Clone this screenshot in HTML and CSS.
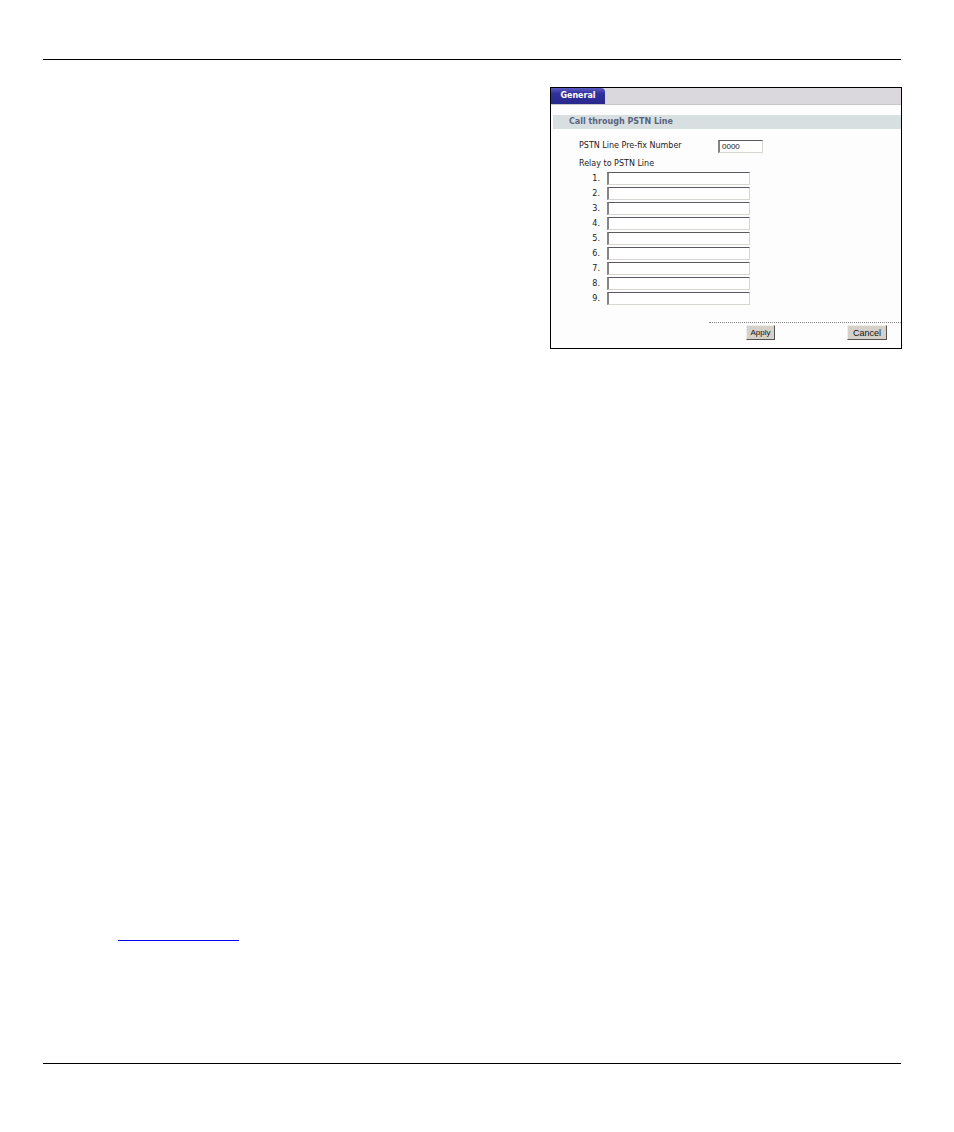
FILE: index.html
```html
<!DOCTYPE html>
<html lang="en">
<head>
<meta charset="utf-8">
<meta name="viewport" content="width=device-width, initial-scale=1">
<title>Call through PSTN Line</title>
<link rel="stylesheet" href="styles.css">
</head>
<body>
<main class="page">
  <form class="panel">
    <nav class="tabs"><button type="button" class="tab">General</button></nav>
    <h1 class="section-title">Call through PSTN Line</h1>
    <div class="fields">
      <div class="prefix-row">
        <label for="prefix">PSTN Line Pre-fix Number</label>
        <input class="field" id="prefix" type="text" value="0000">
      </div>
      <p class="relay-title">Relay to PSTN Line</p>
      <div class="relay-list">
        <label for="relay1">1.</label><input class="field" id="relay1" type="text">
        <label for="relay2">2.</label><input class="field" id="relay2" type="text">
        <label for="relay3">3.</label><input class="field" id="relay3" type="text">
        <label for="relay4">4.</label><input class="field" id="relay4" type="text">
        <label for="relay5">5.</label><input class="field" id="relay5" type="text">
        <label for="relay6">6.</label><input class="field" id="relay6" type="text">
        <label for="relay7">7.</label><input class="field" id="relay7" type="text">
        <label for="relay8">8.</label><input class="field" id="relay8" type="text">
        <label for="relay9">9.</label><input class="field" id="relay9" type="text">
      </div>
    </div>
    <div class="actions">
      <button type="button" class="button apply">Apply</button>
      <button type="button" class="button cancel">Cancel</button>
    </div>
  </form>
  <a class="reference-link" href="#"></a>
</main>
</body>
</html>
```
FILE: styles.css
```css
* {
  box-sizing: border-box;
}

body {
  margin: 0;
  padding: 59px 53px 68px 43px;
  min-height: 100vh;
  display: flex;
  background: #fff;
  color: #222;
  font: 8px/14px "DejaVu Sans", sans-serif;
}

.page {
  flex: 1;
  display: flex;
  flex-direction: column;
  justify-content: space-between;
  padding: 27px 0 122px;
  border-top: 1px solid #000;
  border-bottom: 1px solid #000;
}

.panel {
  align-self: flex-end;
  width: 352px;
  max-width: 100%;
  margin-right: -1px;
  border: 1px solid #000;
  background: #fefdfe;
}

.tabs {
  display: flex;
  height: 17px;
  background: #dad8dc;
  border-bottom: 1px solid #c8c6c9;
}

.tab {
  width: 54px;
  padding: 0;
  border: 0;
  border-top-right-radius: 4px;
  background: linear-gradient(#5c5cc4, #30309c 35%, #28288c);
  color: #fff;
  font: bold 8px/14px "DejaVu Sans", sans-serif;
}

.section-title {
  margin: 10px 0 0 2px;
  padding: 0 16px;
  background: #d7dfe1;
  color: #5a6480;
  font: bold 8px/14px "DejaVu Sans", sans-serif;
}

.fields {
  padding: 10px 28px 0;
}

.prefix-row {
  display: grid;
  grid-template-columns: 139px 45px;
  align-items: center;
}

.field {
  width: 100%;
  height: 13px;
  padding: 0 2px;
  border: 1px solid #d8d6d0;
  border-top: 1px solid #5c5a60;
  border-left: 2px solid #858388;
  border-radius: 0;
  background: #fff;
  color: #222;
  font: 8px/10px "Liberation Sans", sans-serif;
}

.relay-title {
  margin: 4px 0 1px;
}

.relay-list {
  display: grid;
  grid-template-columns: 21px 143px;
  grid-auto-rows: 13px;
  gap: 2px 7px;
  text-align: right;
}

.actions {
  display: flex;
  justify-content: space-between;
  align-items: flex-start;
  margin: 17px 0 0 158px;
  padding: 2px 14px 8px 37px;
  border-top: 1px dotted #888;
}

.button {
  height: 15px;
  padding: 0;
  border: 1px solid;
  border-color: #eee #55534f #55534f #eee;
  border-radius: 0;
  background: #d5d1ca;
  color: #111;
  font: 8px/12px "Liberation Sans", sans-serif;
}

.apply {
  width: 29px;
}

.cancel {
  width: 40px;
  font-size: 9px;
}

.reference-link {
  width: 121px;
  margin-left: 75px;
  border-bottom: 1px solid #00f;
}
```
